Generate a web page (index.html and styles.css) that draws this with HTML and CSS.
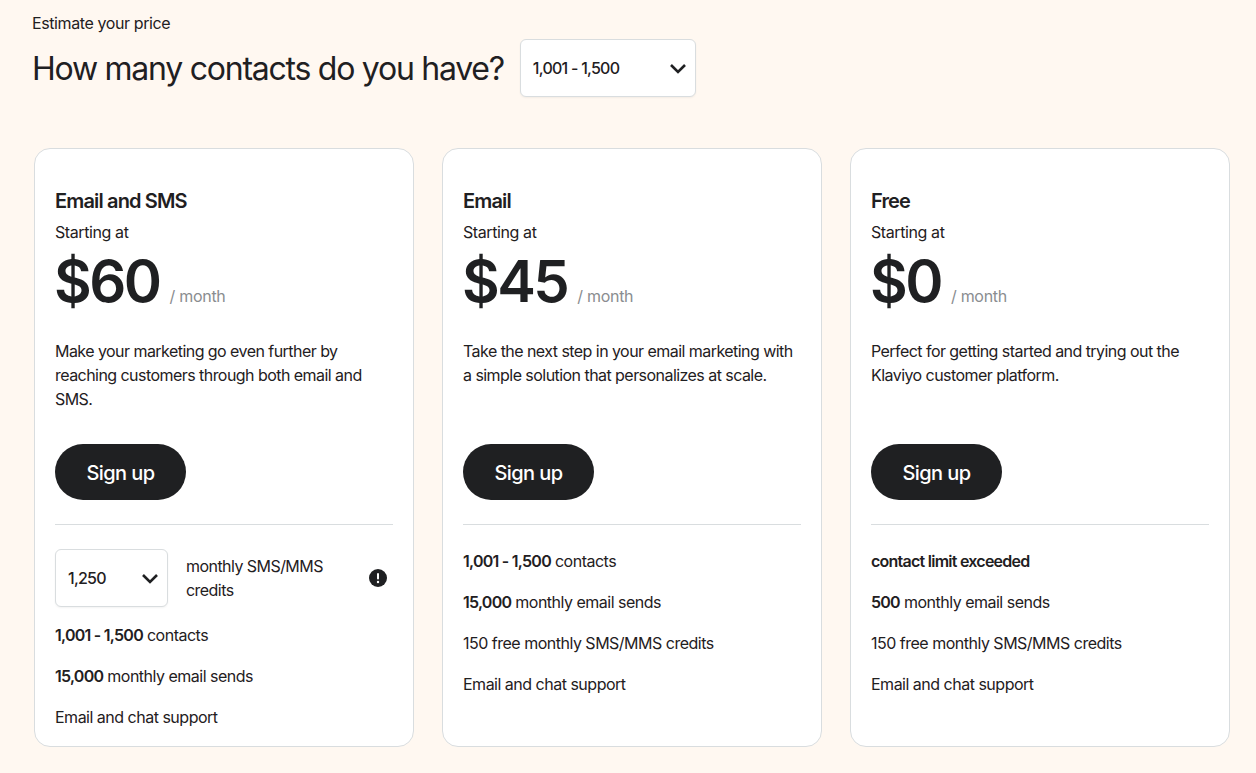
FILE: index.html
```html
<!DOCTYPE html>
<html lang="en">
<head>
    <meta charset="UTF-8">
    <title>Pricing</title>
    <link rel="stylesheet" href="styles.css">
</head>
<body>
    <header class="estimate">
        <div class="estimate-label">Estimate your price</div>
        <div class="estimate-row">
            <h1>How many contacts do you have?</h1>
            <div class="select select-contacts">
                <span>1,001 - 1,500</span>
                <svg class="chevron" viewBox="0 0 18 11"><path d="M2 2l7 7 7-7"/></svg>
            </div>
        </div>
    </header>

    <main class="plans">
        <section class="plan">
            <h2>Email and SMS</h2>
            <div class="starting">Starting at</div>
            <div class="price"><span class="amount">$60</span><span class="per">/ month</span></div>
            <p class="desc">Make your marketing go even further by reaching customers through both email and SMS.</p>
            <button class="signup">Sign up</button>
            <hr>
            <div class="sms-row">
                <div class="select select-sms">
                    <span>1,250</span>
                    <svg class="chevron" viewBox="0 0 18 11"><path d="M2 2l7 7 7-7"/></svg>
                </div>
                <div class="sms-label">monthly SMS/MMS credits</div>
                <svg class="alert" viewBox="0 0 18 18"><circle cx="9" cy="9" r="9"/><rect x="8" y="4" width="2" height="6.5" rx="1"/><circle cx="9" cy="13" r="1.2"/></svg>
            </div>
            <ul class="features features-tight">
                <li><b>1,001 - 1,500</b> contacts</li>
                <li><b>15,000</b> monthly email sends</li>
                <li>Email and chat support</li>
            </ul>
        </section>

        <section class="plan">
            <h2>Email</h2>
            <div class="starting">Starting at</div>
            <div class="price"><span class="amount">$45</span><span class="per">/ month</span></div>
            <p class="desc">Take the next step in your email marketing with a simple solution that personalizes at scale.</p>
            <button class="signup">Sign up</button>
            <hr>
            <ul class="features">
                <li><b>1,001 - 1,500</b> contacts</li>
                <li><b>15,000</b> monthly email sends</li>
                <li>150 free monthly SMS/MMS credits</li>
                <li>Email and chat support</li>
            </ul>
        </section>

        <section class="plan">
            <h2>Free</h2>
            <div class="starting">Starting at</div>
            <div class="price"><span class="amount">$0</span><span class="per">/ month</span></div>
            <p class="desc">Perfect for getting started and trying out the Klaviyo customer platform.</p>
            <button class="signup">Sign up</button>
            <hr>
            <ul class="features">
                <li><b>contact limit exceeded</b></li>
                <li><b>500</b> monthly email sends</li>
                <li>150 free monthly SMS/MMS credits</li>
                <li>Email and chat support</li>
            </ul>
        </section>
    </main>
</body>
</html>
```

FILE: styles.css
```css
:root {
    --dark: #1f2022;
    --line: #d9dddf;
}
* {
    box-sizing: border-box;
}
body {
    margin: 0;
    height: 773px;
    overflow: hidden;
    background: #fff8f1;
    color: var(--dark);
    font-family: 'Inter', sans-serif;
    font-size: 16px;
    letter-spacing: -0.55px;
}
.estimate {
    padding: 13px 0 0 32px;
}
.estimate-label {
    line-height: 20px;
    letter-spacing: -0.4px;
}
.estimate-row {
    display: flex;
    align-items: center;
    gap: 16px;
    margin-top: 6px;
}
h1 {
    margin: 0;
    font-size: 32px;
    font-weight: 400;
    letter-spacing: -1.25px;
}
.select {
    display: flex;
    align-items: center;
    justify-content: space-between;
    height: 58px;
    background: white;
    border: 1px solid var(--line);
    border-radius: 6px;
    font-weight: 500;
    letter-spacing: -0.75px;
    box-shadow: 0 1px 2px rgba(0, 0, 0, 0.05);
}
.select-contacts {
    width: 176px;
    padding: 0 8px 0 12px;
}
.select-sms {
    flex: none;
    width: 113px;
    padding: 0 8px 0 12px;
}
.chevron {
    width: 18px;
    height: 11px;
}
.chevron path {
    fill: none;
    stroke: var(--dark);
    stroke-width: 2.6;
}
.plans {
    display: flex;
    gap: 28px;
    margin: 51px 0 0 34px;
}
.plan {
    width: 380px;
    height: 599px;
    padding: 40px 20px 0;
    background: white;
    border: 1px solid var(--line);
    border-radius: 16px;
}
h2 {
    margin: 0;
    font-size: 20px;
    line-height: 24px;
    font-weight: 600;
    letter-spacing: -0.85px;
}
.starting {
    margin-top: 8px;
    line-height: 22px;
    letter-spacing: -0.4px;
}
.price {
    display: flex;
    align-items: baseline;
    height: 62px;
    margin-top: 7px;
}
.amount {
    margin-left: -1px;
    font-size: 58px;
    line-height: 62px;
    font-weight: 600;
    letter-spacing: -2.5px;
}
.per {
    margin-left: 10px;
    color: #8a8d90;
    letter-spacing: -0.3px;
}
.desc {
    height: 72px;
    margin: 27px 0 0;
    line-height: 24px;
}
.signup {
    display: block;
    width: 131px;
    height: 56px;
    margin-top: 33px;
    padding: 2px 0 0;
    border: none;
    border-radius: 28px;
    background: var(--dark);
    color: white;
    font-family: inherit;
    font-size: 20px;
    font-weight: 500;
    letter-spacing: -0.6px;
}
hr {
    height: 1px;
    margin: 24px 0 0;
    border: none;
    background: var(--line);
}
.sms-row {
    display: flex;
    align-items: center;
    margin-top: 24px;
}
.sms-label {
    width: 150px;
    margin-left: 18px;
    line-height: 24px;
}
.alert {
    width: 18px;
    height: 18px;
    margin-left: 33px;
}
.alert circle:first-child {
    fill: var(--dark);
}
.alert rect,
.alert circle:last-child {
    fill: white;
}
.features {
    margin: 24px 0 0;
    padding: 0;
    list-style: none;
    letter-spacing: -0.5px;
}
.features-tight {
    margin-top: 16px;
}
.features li {
    line-height: 24px;
    margin-bottom: 17px;
}
.features b {
    font-weight: 600;
    letter-spacing: -0.75px;
}
```
